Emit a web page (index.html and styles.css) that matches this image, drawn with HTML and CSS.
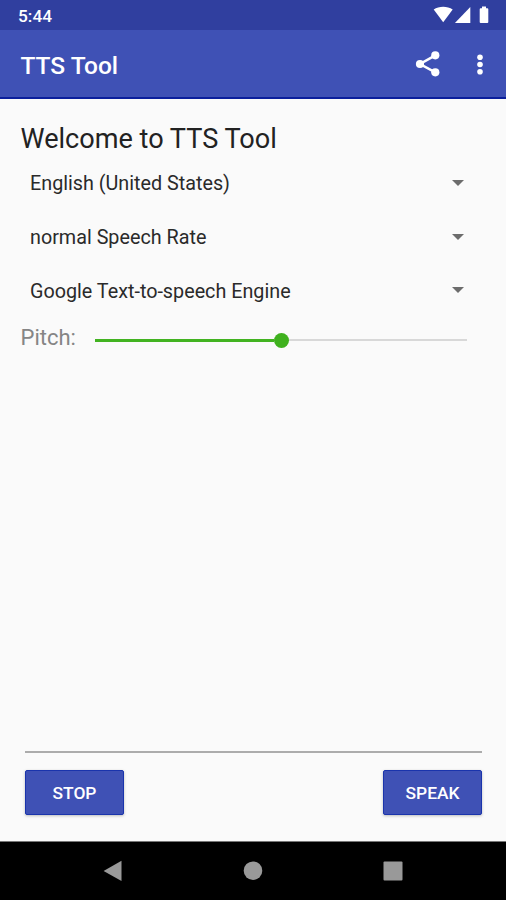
FILE: index.html
```html
<!DOCTYPE html>
<html lang="en">
<head>
<meta charset="utf-8">
<title>TTS Tool</title>
<link rel="stylesheet" href="styles.css">
</head>
<body>
<div class="screen">
  <div class="status-bar">
    <span class="clock">5:44</span>
    <svg class="status-icons" width="60" height="20" viewBox="0 0 60 20" fill="#fff">
      <path d="M0.7 4.6C6 .9 14.300 .9 19.700 4.600L10.200 17.300Z"/>
      <path d="M37.300 2V17.900H21.900Z"/>
      <path d="M49 1.600h4v1.600h1.300q1 0 1 1v12.700q0 1-1 1h-6.600q-1 0-1-1V4.200q0-1 1-1H49z"/>
    </svg>
  </div>
  <header class="app-bar">
    <h1 class="app-title">TTS Tool</h1>
    <svg class="share" width="26" height="28" viewBox="0 0 26 28" fill="#fff">
      <path d="M20.300 5.300L5 14l15.300 8.300" fill="none" stroke="#fff" stroke-width="2.500"/>
      <circle cx="20.300" cy="5.300" r="4.100"/><circle cx="5" cy="14" r="4.100"/><circle cx="20.300" cy="22.300" r="4.100"/>
    </svg>
    <svg class="more" width="8" height="28" viewBox="0 0 8 28" fill="#fff">
      <circle cx="4" cy="7.200" r="2.800"/><circle cx="4" cy="14.500" r="2.800"/><circle cx="4" cy="21.700" r="2.800"/>
    </svg>
  </header>
  <main class="content">
    <h2 class="welcome">Welcome to TTS Tool</h2>
    <div class="spinner"><span class="language">English (United States)</span><svg width="12" height="6" viewBox="0 0 12 6"><path d="M0 0h12L6 6z" fill="#6c6c6c"/></svg></div>
    <div class="spinner"><span class="rate">normal Speech Rate</span><svg width="12" height="6" viewBox="0 0 12 6"><path d="M0 0h12L6 6z" fill="#6c6c6c"/></svg></div>
    <div class="spinner"><span class="engine">Google Text-to-speech Engine</span><svg width="12" height="6" viewBox="0 0 12 6"><path d="M0 0h12L6 6z" fill="#6c6c6c"/></svg></div>
    <div class="pitch">
      <span class="pitch-label">Pitch:</span>
      <div class="slider"><div class="filled"></div><div class="thumb"></div><div class="rest"></div></div>
    </div>
    <div class="text-input"></div>
    <div class="actions">
      <button class="button stop">STOP</button>
      <button class="button speak">SPEAK</button>
    </div>
  </main>
  <nav class="nav-bar">
    <svg width="20" height="22" viewBox="0 0 20 22"><path d="M18.500.8V21L.6 10.900z" fill="#999"/></svg>
    <svg width="20" height="22" viewBox="0 0 20 22"><circle cx="10" cy="10.700" r="9.300" fill="#999"/></svg>
    <svg width="20" height="22" viewBox="0 0 20 22"><rect x=".5" y="1.500" width="19" height="19" rx="1" fill="#999"/></svg>
  </nav>
</div>
</body>
</html>
```
FILE: styles.css
```css
* { box-sizing: border-box; }
body { margin: 0; font-family: Roboto, "Liberation Sans", sans-serif; }
svg { display: block; flex: none; }
.screen { width: 506px; height: 900px; display: flex; flex-direction: column; background: #fafafa; overflow: hidden; }
.status-bar { height: 30px; flex: none; display: flex; justify-content: space-between; align-items: flex-start; padding: 5px 13px 0 18px; background: #303f9f; color: #fff; }
.clock { font-size: 17.300px; font-weight: 500; line-height: 22px; }
.app-bar { height: 69px; flex: none; display: flex; align-items: center; padding: 0 22.500px 0 20.500px; background: #3f51b5; border-bottom: 2px solid #0b1f9c; color: #fff; }
.app-title { margin: 5px 0 0; font-size: 24.500px; font-weight: 500; line-height: 30px; flex: 1; white-space: nowrap; }
.share { margin-right: 34.500px; }
.content { flex: 1; display: flex; flex-direction: column; padding: 22px 24px 0 20.500px; }
.welcome { margin: 0; font-size: 27.100px; font-weight: 400; line-height: 36px; color: #222; white-space: nowrap; }
.spinner { height: 53.700px; flex: none; display: flex; align-items: center; justify-content: space-between; padding: 0 18px 0 9.500px; font-size: 19.750px; color: #2a2a2a; white-space: nowrap; }
.spinner:nth-of-type(1) { margin-top: -1px; }
.spinner span { padding-top: 2px; }
.pitch { display: flex; align-items: center; height: 40px; margin-top: .5px; }
.pitch-label { width: 74.500px; font-size: 22px; line-height: 30px; margin-top: 1px; color: #858585; }
.slider { width: 372px; display: flex; align-items: center; margin-top: 5px; }
.filled { width: 179px; height: 3px; background: #42b321; }
.thumb { width: 15px; height: 15px; border-radius: 50%; background: #3fb11e; }
.rest { flex: 1; height: 2px; background: #d8d8d8; }
.text-input { flex: 1; margin: 0 0 0 4.500px; border-bottom: 2px solid #acacac; }
.actions { display: flex; justify-content: space-between; height: 88px; padding: 17px 0 0 4.500px; }
.button { width: 99px; height: 45px; padding: 1px 0 0; border: 1px solid #1a34ac; border-radius: 2px; background: #3f51b5; color: #fff; font: 500 17.400px/42px Roboto, "Liberation Sans", sans-serif; box-shadow: 0 1px 3px rgba(0, 0, 0, .25); }
.nav-bar { height: 59px; flex: none; display: flex; justify-content: center; gap: 120px; padding-top: 18px; background: #000; border-top: 1px solid #777; }
```
